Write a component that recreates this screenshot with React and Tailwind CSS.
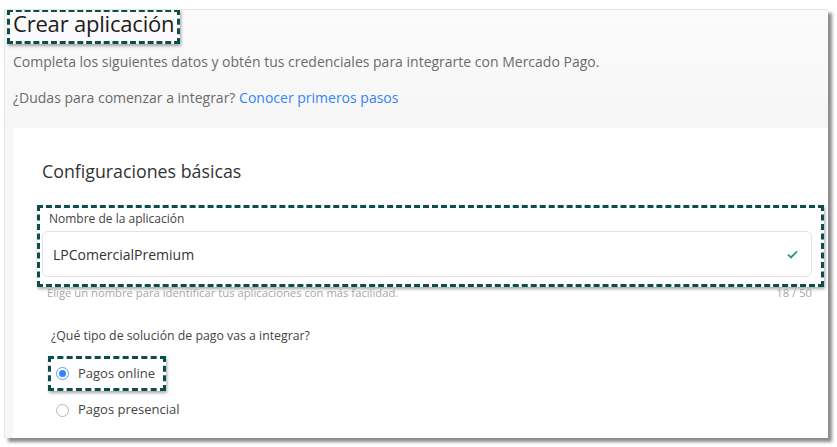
import React from 'react';

function Dashed({ className = '', children }) {
  return (
    <div className={`border-[3px] border-dashed border-[#0c4f4a] shadow-[1px_2px_3px_rgba(0,0,0,0.35)] ${className}`}>
      {children}
    </div>
  );
}

function Radio({ checked }) {
  return (
    <span className={`w-[13px] h-[13px] rounded-full border flex items-center justify-center bg-white shrink-0 ${checked ? 'border-[#5b9bf8]' : 'border-[#b5b5b5]'}`}>
      {checked && <span className="w-[7px] h-[7px] rounded-full bg-[#3483fa]" />}
    </span>
  );
}

export default function App() {
  return (
    <div className="w-[837px] h-[447px] bg-white pt-[9px] pl-[4px] font-['Open_Sans',sans-serif]">
      <div className="w-[824px] h-[429px] bg-[#f7f7f7] border-t border-l border-[#e6e6e6] shadow-[4px_4px_3px_rgba(0,0,0,0.45)] flex flex-col overflow-hidden">
        {/* Header */}
        <div className="pl-[2px] bg-gradient-to-b from-[#fbfbfb] to-[#f6f6f6]">
          <Dashed className="inline-block -mt-px pl-[3px] pr-[3px] h-[35px]">
            <h1 className="text-[22px] leading-[23px] text-[#1a1a1a] tracking-[-0.2px]">Crear aplicación</h1>
          </Dashed>
          <p className="pl-[6px] mt-[8px] text-[14px] leading-[20px] text-[#6b6b6b]">
            Completa los siguientes datos y obtén tus credenciales para integrarte con Mercado Pago.
          </p>
          <p className="pl-[6px] mt-[16px] text-[14px] leading-[20px] text-[#6b6b6b]">
            ¿Dudas para comenzar a integrar? <span className="text-[#3483fa]">Conocer primeros pasos</span>
          </p>
          <div className="h-[20px]" />
        </div>

        {/* Card */}
        <div className="flex-1 ml-[8px] bg-white pt-[31px]">
          <h2 className="pl-[29px] text-[17.8px] leading-[24px] text-[#333]">Configuraciones básicas</h2>

          <div className="pl-[24px] pr-[4px] mt-[22px]">
            <Dashed className="h-[82px] pl-[2px] pr-[9px] pt-[3px]">
              <p className="pl-[7px] text-[12px] leading-[16px] text-[#444]">Nombre de la aplicación</p>
              <div className="mt-[4px] h-[46px] border border-[#e3e3e3] rounded-[6px] flex items-center justify-between pl-[10px] pr-[13px]">
                <span className="text-[14px] text-[#333]">LPComercialPremium</span>
                <svg width="11" height="9" viewBox="0 0 11 9" fill="none">
                  <path d="M1 4.6 L4 7.4 L10 1.4" stroke="#1f9c7c" strokeWidth="1.8" />
                </svg>
              </div>
            </Dashed>
            <div className="flex justify-between pl-[10px] pr-[12px] -mt-[1px] text-[11.25px] leading-[14px] text-[#a8a8a8]">
              <span>Elige un nombre para identificar tus aplicaciones con más facilidad.</span>
              <span>18 / 50</span>
            </div>
          </div>

          <p className="pl-[38px] mt-[27px] text-[12.3px] leading-[18px] text-[#444]">¿Qué tipo de solución de pago vas a integrar?</p>

          <div className="pl-[35px] mt-[11px]">
            <Dashed className="inline-flex items-center gap-[9px] h-[35px] pl-[5px] pr-[8px]">
              <Radio checked />
              <span className="text-[13px] text-[#444]">Pagos online</span>
            </Dashed>
          </div>
          <div className="pl-[43px] mt-[10px] flex items-center gap-[9px] h-[18px]">
            <Radio />
            <span className="text-[13px] text-[#444]">Pagos presencial</span>
          </div>
        </div>
      </div>
    </div>
  );
}
